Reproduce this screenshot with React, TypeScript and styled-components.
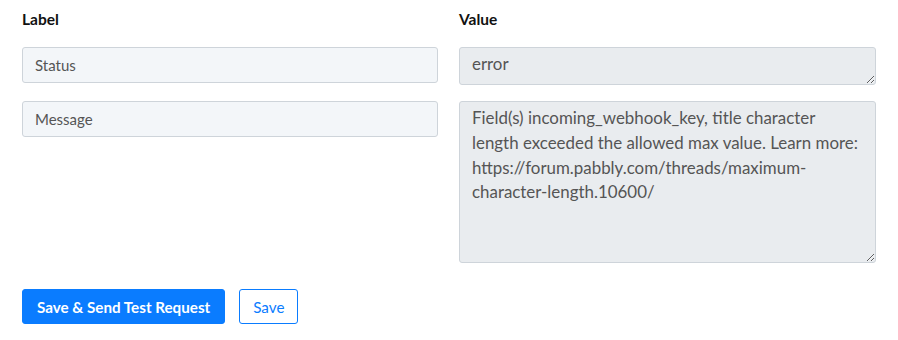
import React from 'react';
import styled, { createGlobalStyle } from 'styled-components';

const GlobalStyle = createGlobalStyle`
  body {
    margin: 0;
    background: #fff;
    font-family: 'Lato', 'Noto Sans', sans-serif;
  }
`;

const Page = styled.div`
  padding: 9px 22px 0 22px;
`;

const Grid = styled.div`
  display: grid;
  grid-template-columns: 416px 417px;
  column-gap: 21px;
  row-gap: 16px;
  align-items: start;
`;

const Heading = styled.div`
  font-size: 15.5px;
  font-weight: 700;
  color: #111;
  line-height: 20px;
  margin-bottom: 2px;
`;

const KeyInput = styled.input`
  box-sizing: border-box;
  width: 100%;
  height: 36px;
  padding: 0 12px;
  border: 1px solid #ced4da;
  border-radius: 3px;
  background: #f3f6f9;
  font-family: 'Lato', 'Noto Sans', sans-serif;
  font-size: 15px;
  color: #555;
  outline: none;
`;

const ValueArea = styled.textarea<{ $h: number }>`
  box-sizing: border-box;
  display: block;
  width: 100%;
  height: ${(p) => p.$h}px;
  padding: 4px 14px 4px 12px;
  border: 1px solid #ced4da;
  border-radius: 3px;
  background: #e9ecef;
  font-family: 'Lato', 'Noto Sans', sans-serif;
  font-size: 16.9px;
  line-height: 24.8px;
  color: #555;
  outline: none;
  resize: vertical;
`;

const Actions = styled.div`
  display: flex;
  gap: 14px;
  margin-top: 26px;
`;

const Button = styled.button<{ $outline?: boolean }>`
  height: 35px;
  padding: 0 ${(p) => (p.$outline ? 13 : 14)}px;
  border-radius: 3px;
  font-family: 'Lato', 'Noto Sans', sans-serif;
  font-size: 15.2px;
  font-weight: ${(p) => (p.$outline ? 400 : 700)};
  border: 1px solid #0a7cff;
  background: ${(p) => (p.$outline ? '#fff' : '#0a7cff')};
  color: ${(p) => (p.$outline ? '#0a7cff' : '#fff')};
  cursor: pointer;
`;

export default function App() {
  return (
    <Page>
      <GlobalStyle />
      <Grid>
        <Heading>Label</Heading>
        <Heading>Value</Heading>
        <KeyInput readOnly value="Status" />
        <ValueArea $h={38} readOnly value="error" />
        <KeyInput readOnly value="Message" />
        <ValueArea
          $h={162}
          readOnly
          value="Field(s) incoming_webhook_key, title character length exceeded the allowed max value. Learn more: https://forum.pabbly.com/threads/maximum-character-length.10600/"
        />
      </Grid>
      <Actions>
        <Button>Save &amp; Send Test Request</Button>
        <Button $outline>Save</Button>
      </Actions>
    </Page>
  );
}
